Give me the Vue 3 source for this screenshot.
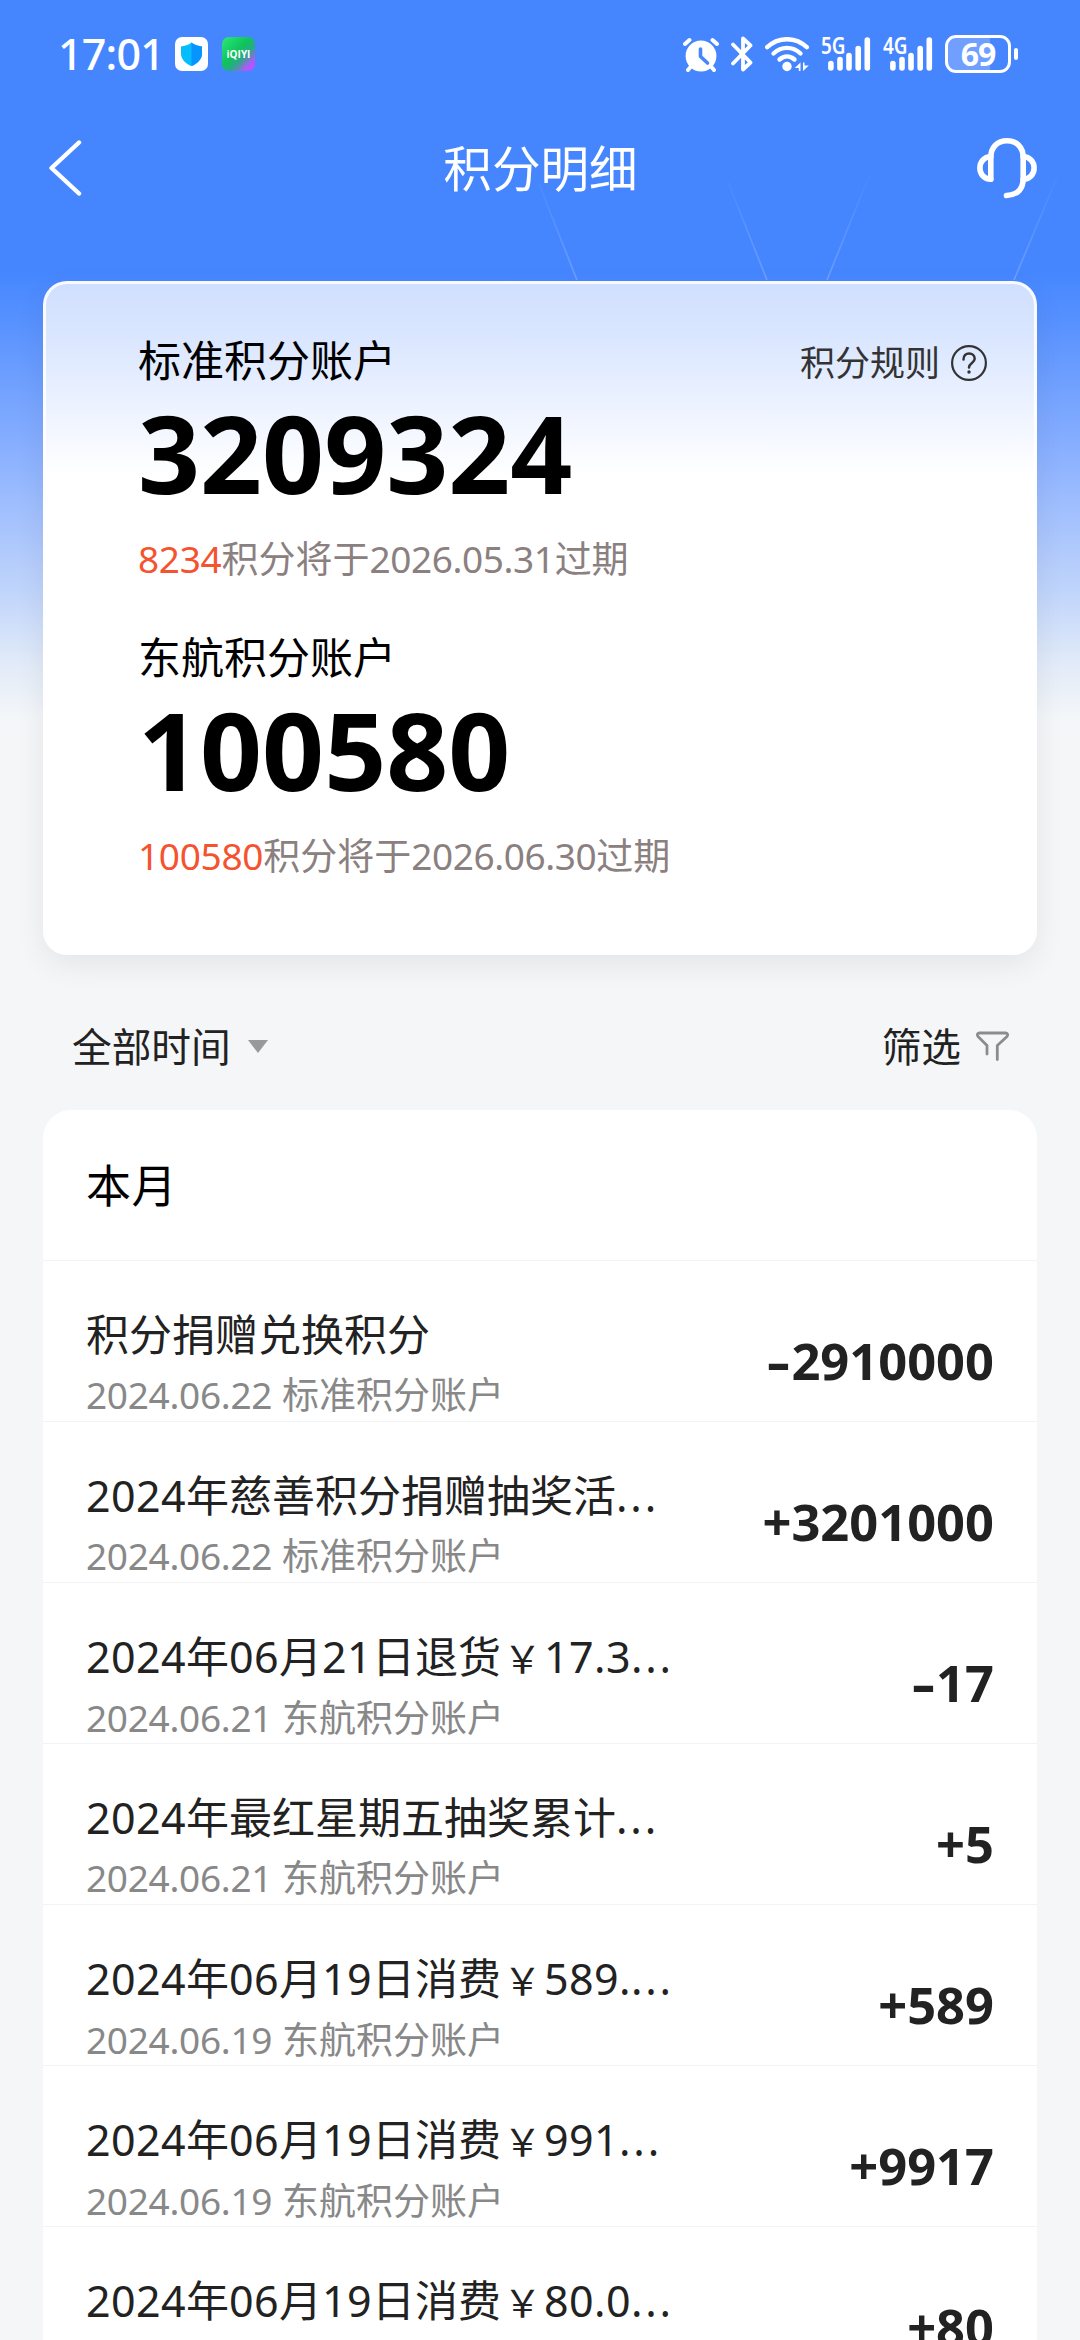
<script setup>
const accounts = [
  { name: '标准积分账户', points: '3209324', expiring: '8234', date: '2026.05.31' },
  { name: '东航积分账户', points: '100580', expiring: '100580', date: '2026.06.30' },
]

const records = [
  { title: '积分捐赠兑换积分', cut: false, date: '2024.06.22', account: '标准积分账户', sign: '-', amount: '2910000' },
  { title: '2024年慈善积分捐赠抽奖活', cut: true, date: '2024.06.22', account: '标准积分账户', sign: '+', amount: '3201000' },
  { title: '2024年06月21日退货￥17.3', cut: true, date: '2024.06.21', account: '东航积分账户', sign: '-', amount: '17' },
  { title: '2024年最红星期五抽奖累计', cut: true, date: '2024.06.21', account: '东航积分账户', sign: '+', amount: '5' },
  { title: '2024年06月19日消费￥589.', cut: true, date: '2024.06.19', account: '东航积分账户', sign: '+', amount: '589' },
  { title: '2024年06月19日消费￥991', cut: true, date: '2024.06.19', account: '东航积分账户', sign: '+', amount: '9917' },
  { title: '2024年06月19日消费￥80.0', cut: true, date: '2024.06.19', account: '东航积分账户', sign: '+', amount: '80' },
]

// Splits a title into runs so that digits can be tracked separately from Han characters.
const runs = (text) => text.match(/[\d.]+|￥|[^\d.￥]+/g).map((t) => ({
  t,
  kind: /[\d.]/.test(t) ? 'num' : t === '￥' ? 'yen' : 'han',
}))

const networks = ['5G', '4G']
</script>

<template>
  <div class="page">
    <svg class="rays" width="1080" height="120" viewBox="0 160 1080 120">
      <defs>
        <linearGradient id="ray" gradientUnits="userSpaceOnUse" x1="0" y1="170" x2="0" y2="280">
          <stop offset="0" stop-color="#fff" stop-opacity="0" />
          <stop offset="1" stop-color="#fff" stop-opacity=".2" />
        </linearGradient>
      </defs>
      <path d="M539 184L577 280M728 182L767 280M869 176L827 280M1061 168L1014 280" stroke="url(#ray)" stroke-width="1.6" />
    </svg>

    <header class="status">
      <div class="status-left">
        <span class="clock">17:01</span>
        <svg class="shield" width="33" height="34" viewBox="0 0 33 34">
          <rect width="33" height="34" rx="7" fill="#fff" />
          <path d="M16.500 5.500C19.500 8 23.500 9.200 27 9.500V16.500C27 22.500 22 27 16.500 29C11 27 6 22.500 6 16.500V9.500C9.500 9.200 13.500 8 16.500 5.500Z" fill="#05bdfd" />
          <path d="M16.500 5.500C19.500 8 23.500 9.200 27 9.500V16.500C27 22.500 22 27 16.500 29Z" fill="#0595fd" />
        </svg>
        <span class="video-app">iQIYI</span>
      </div>
      <div class="status-right">
        <svg class="alarm" width="36" height="35" viewBox="0 0 36 35">
          <circle cx="18" cy="19" r="15.400" fill="#fff" />
          <path d="M2 7L6.500 3M29.500 3L34 7M8 29.500L5 33M28 29.500L31 33" stroke="#fff" stroke-width="4" stroke-linecap="round" />
          <path d="M17.500 12V19.500L24.500 26" fill="none" stroke="#4586ff" stroke-width="3.600" stroke-linecap="round" stroke-linejoin="round" />
        </svg>
        <svg class="bt" width="23" height="36" viewBox="0 0 23 36">
          <path d="M2 8.500L19.500 26.500L12 33.500V2.500L19.500 9.500L2 27.500" fill="none" stroke="#fff" stroke-width="3.800" stroke-linejoin="round" stroke-linecap="round" />
        </svg>
        <svg class="wifi" width="45" height="35" viewBox="0 0 45 35">
          <g fill="none" stroke="#fff" stroke-width="4.400" stroke-linecap="round">
            <path d="M2.200 10.200C13.500 -.5 30.500 -.5 41.800 10.200" />
            <path d="M8.500 16.500C16.500 9 27.500 9 35.500 16.500" />
            <path d="M14.500 22.500C19 18.500 25 18.500 29.500 22.500" />
          </g>
          <circle cx="22" cy="29.500" r="4.700" fill="#fff" />
          <path d="M35.500 25.500V34H33.800V31H29.800ZM38 25.500V34L43.800 28.500H39.500V25.500Z" fill="#fff" />
        </svg>
        <div v-for="n in networks" :key="n" class="network">
          <span class="gen">{{ n }}</span>
          <svg width="43" height="34" viewBox="0 0 43 34">
            <path d="M2.900 26.500V31M12 22.500V31M21 18.500V31M30.200 11.500V31M39.300 3V31" stroke="#fff" stroke-width="5.600" stroke-linecap="round" />
          </svg>
        </div>
        <div class="battery"><span>69</span></div>
        <i class="nub"></i>
      </div>
    </header>

    <nav class="nav">
      <svg class="back" width="34" height="56" viewBox="0 0 34 56">
        <path d="M31 2.500L3.500 28L31 53.500" fill="none" stroke="#fff" stroke-width="4.400" stroke-linecap="round" stroke-linejoin="round" />
      </svg>
      <h1>积分明细</h1>
      <svg class="service" width="60" height="62" viewBox="0 0 60 62">
        <g fill="none" stroke="#fff" stroke-width="5.600" stroke-linecap="round" stroke-linejoin="round">
          <path d="M13.800 42V20.500C13.800 10 20.500 3.700 30 3.700S46.200 10 46.200 20.500V41.500C46.200 52 40.500 58 29.500 58.500" />
          <path d="M13.800 19.500C7 20 2.900 25 2.900 31S7 42 13.800 42.300" />
          <path d="M46.200 19.500C53 20 57.100 25 57.100 31S53 42 46.200 42.300" />
        </g>
      </svg>
    </nav>

    <section class="card">
      <div class="accounts">
        <div v-for="a in accounts" :key="a.name" class="account">
          <div class="name">{{ a.name }}</div>
          <div class="points">{{ a.points }}</div>
          <div class="expiry"><em>{{ a.expiring }}</em>积分将于<span class="until">{{ a.date }}</span>过期</div>
        </div>
      </div>
      <div class="rules">
        <span>积分规则</span>
        <svg width="36" height="36" viewBox="0 0 36 36" fill="none" stroke="#333">
          <circle cx="18" cy="18" r="16.900" stroke-width="2.200" />
          <path d="M12.500 14.500C12.500 10.500 15 8.500 18.100 8.500S23.700 10.700 23.700 13.800C23.700 18 18 18 18 22.500" stroke-width="2.500" stroke-linecap="round" />
          <circle cx="18" cy="27" r="1.700" fill="#333" stroke="none" />
        </svg>
      </div>
    </section>

    <div class="filters">
      <div class="filter">
        <span>全部时间</span>
        <svg class="arrow" width="20" height="13" viewBox="0 0 20 13"><path d="M0 0H20L10 13Z" fill="#999" /></svg>
      </div>
      <div class="filter">
        <span>筛选</span>
        <svg class="funnel" width="33" height="31" viewBox="0 0 33 31">
          <path d="M11 23V14.500L2 5.500C.8 3.700 1.500 2 3.500 2H29.500C31.500 2 32.200 3.700 31 5.500L21.300 14.500V28.500" fill="none" stroke="#8c8c8c" stroke-width="2.800" stroke-linecap="round" stroke-linejoin="round" />
        </svg>
      </div>
    </div>

    <section class="list">
      <h2>本月</h2>
      <div v-for="(r, i) in records" :key="i" class="row">
        <div class="info">
          <div class="title"><span v-for="(p, j) in runs(r.title)" :key="j" :class="p.kind">{{ p.t }}</span><span v-if="r.cut" class="dots">...</span></div>
          <div class="sub"><span class="date">{{ r.date }}</span><span>{{ r.account }}</span></div>
        </div>
        <div class="amount"><span :class="r.sign === '-' ? 'minus' : 'plus'">{{ r.sign }}</span>{{ r.amount }}</div>
      </div>
    </section>
  </div>
</template>

<style>
body {
  margin: 0;
  overflow: hidden;
}
</style>

<style scoped>
.page {
  position: relative;
  display: flex;
  flex-direction: column;
  width: 1080px;
  height: 2340px;
  overflow: hidden;
  font-family: "Noto Sans", "Noto Sans CJK SC", sans-serif;
  color: #222;
  background:
    linear-gradient(#4586ff 0, #4586ff 272px, #5590ff 315px, #8db2ff 460px, #c4d7fb 600px, #e2ebf8 665px, #f4f6f9 718px, #f5f6f8 760px);
}
.rays {
  position: absolute;
  left: 0;
  top: 160px;
}
.status {
  flex: none;
  display: flex;
  justify-content: space-between;
  height: 108px;
  padding: 0 62px 0 58px;
  color: #fff;
}
.status-left,
.status-right {
  display: flex;
  align-items: center;
}
.clock {
  width: 117px;
  font: 500 43px/60px "Noto Sans", sans-serif;
  letter-spacing: -0.8px;
  white-space: nowrap;
}
.video-app {
  width: 33px;
  height: 34px;
  margin-left: 14px;
  border-radius: 7px;
  background: linear-gradient(135deg, #2fe878 0, #0dc55c 42%, #2aa988 62%, #b455ff 84%);
  font: 700 10px/34px "Open Sans", sans-serif;
  text-align: center;
}
.bt {
  margin-left: 12px;
}
.wifi {
  margin-left: 11px;
}
.network {
  position: relative;
  height: 34px;
  margin-left: 18px;
}
.network + .network {
  margin-left: 19px;
}
.gen {
  position: absolute;
  left: -7px;
  top: -4px;
  font: 600 23px/24px "Noto Sans", sans-serif;
  transform: scaleX(0.82);
  transform-origin: 0 50%;
}
.battery {
  box-sizing: border-box;
  width: 66px;
  height: 38px;
  margin-left: 12px;
  border: 3px solid #fff;
  border-radius: 11px;
  background: linear-gradient(90deg, #709fff 42px, transparent 42px);
  font: 700 32px/31px "Noto Sans", sans-serif;
  letter-spacing: -1px;
  text-align: center;
}
.nub {
  width: 4px;
  height: 12px;
  margin-left: 3px;
  border-radius: 2px;
  background: #fff;
}
.nav {
  flex: none;
  display: flex;
  align-items: center;
  justify-content: space-between;
  height: 120px;
  padding: 0 43px 0 48px;
}
.nav h1 {
  margin: 0 0 0 22px;
  font-size: 48.6px;
  line-height: 70px;
  font-weight: 400;
  color: #fff;
}
.card {
  flex: none;
  box-sizing: border-box;
  display: flex;
  justify-content: space-between;
  align-items: flex-start;
  width: 994px;
  height: 674px;
  margin: 53px auto 0;
  padding: 47px 47px 0 92px;
  border: 3px solid rgba(255, 255, 255, 0.85);
  border-radius: 24px;
  background: linear-gradient(#d0dfff 0, #dbe7ff 60px, #eff4ff 135px, #fff 195px) border-box;
  box-shadow: 0 10px 30px rgba(0, 0, 0, 0.07);
}
.account {
  height: 297px;
}
.name {
  font-size: 43px;
  line-height: 60px;
  color: #000;
}
.points {
  margin-top: 11px;
  font-size: 108.5px;
  line-height: 100px;
  font-weight: 700;
  color: #000;
}
.expiry {
  margin-top: 27px;
  font-size: 37px;
  line-height: 60px;
  color: #8b8080;
}
.expiry em {
  font-style: normal;
  letter-spacing: -0.3px;
  color: #f5532f;
}
.until {
  letter-spacing: -0.4px;
}
.rules {
  display: flex;
  align-items: center;
  gap: 11px;
  margin-top: 2px;
  font-size: 35px;
  line-height: 60px;
  color: #333;
}
.filters {
  flex: none;
  display: flex;
  align-items: center;
  justify-content: space-between;
  height: 155px;
  padding: 28px 71px 0 72px;
  box-sizing: border-box;
}
.filter {
  display: flex;
  align-items: center;
  font-size: 39.7px;
  line-height: 60px;
}
.arrow {
  margin-left: 17px;
}
.funnel {
  margin-left: 15px;
}
.list {
  flex: none;
  width: 994px;
  margin: 0 auto;
  border-radius: 28px 28px 0 0;
  background: #fff;
}
.list h2 {
  height: 150px;
  margin: 0;
  padding-left: 43px;
  font-size: 45px;
  line-height: 152px;
  font-weight: 400;
  letter-spacing: 0.5px;
  color: #000;
}
.row {
  display: flex;
  justify-content: space-between;
  box-sizing: border-box;
  height: 161px;
  padding: 44px 43px 0;
  border-top: 1px solid #f2f3f5;
}
.title {
  font-size: 43px;
  line-height: 60px;
  white-space: nowrap;
}
.num {
  letter-spacing: 0.4px;
}
.yen {
  display: inline-block;
  width: 43px;
  font-size: 38px;
  text-align: center;
}
.dots {
  letter-spacing: 2.8px;
}
.sub {
  font-size: 37px;
  line-height: 60px;
  color: #888;
}
.date {
  display: inline-block;
  width: 196px;
  letter-spacing: -0.3px;
}
.amount {
  margin-top: 26px;
  font-size: 50.6px;
  line-height: 60px;
  font-weight: 700;
}
.minus {
  display: inline-block;
  width: 25px;
  text-align: center;
  transform: scaleX(1.45);
}
</style>
